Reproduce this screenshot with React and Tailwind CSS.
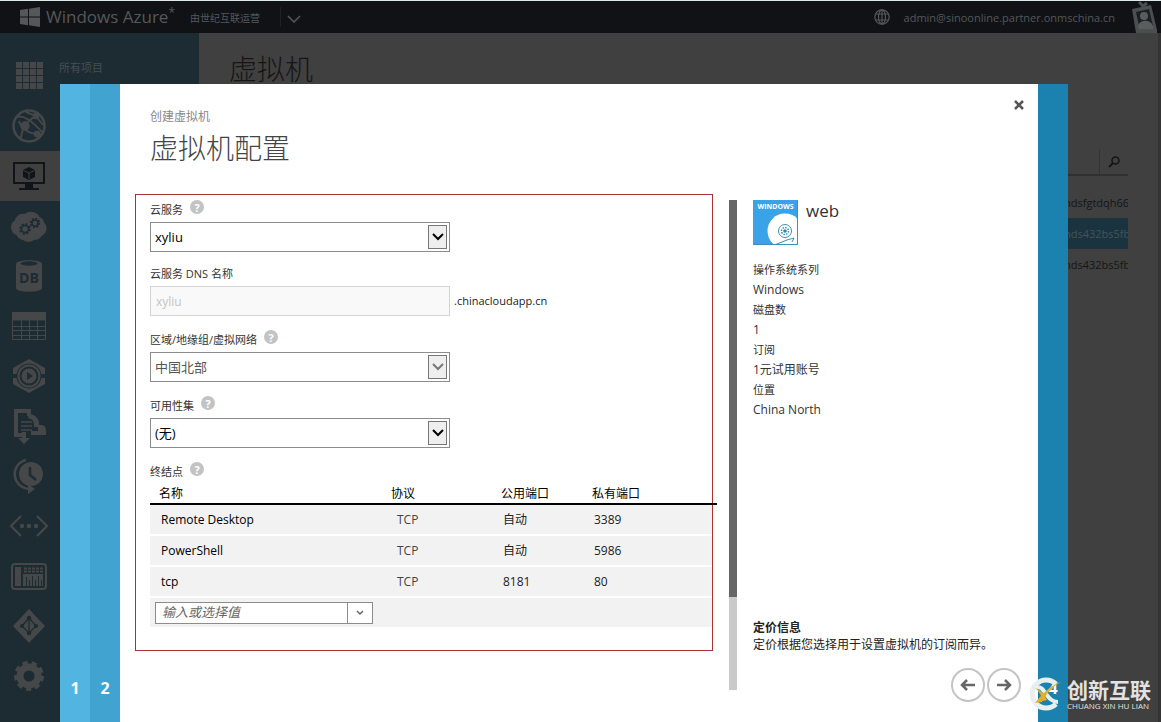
// src/pages/VirtualMachines/CreateVm.jsx
import React, { useState } from "react";

const ENDPOINTS = [
  { nombre: "Remote Desktop", protocolo: "TCP", publico: "自动", privado: "3389" },
  { nombre: "PowerShell", protocolo: "TCP", publico: "自动", privado: "5986" },
  { nombre: "tcp", protocolo: "TCP", publico: "8181", privado: "80" },
];

const SUMMARY = [
  ["操作系统系列", "Windows"],
  ["磁盘数", "1"],
  ["订阅", "1元试用账号"],
  ["位置", "China North"],
];

// Sidebar glyphs, all drawn on a 40x40 box
const NAV = [
  {
    name: "所有项目",
    icon: (
      <g fill="currentColor">
        {[0, 1, 2, 3].map((r) =>
          [0, 1, 2, 3].map((c) => (
            <rect key={`${r}-${c}`} x={7 + c * 7} y={6 + r * 7} width="6" height="6" />
          ))
        )}
      </g>
    ),
  },
  {
    name: "网站",
    icon: (
      <g fill="none" stroke="currentColor" strokeWidth="2.5">
        <circle cx="20" cy="20" r="15.5" />
        <path d="M8 11C14 9 21 13 34 27M31 9C22 11 13 19 12 32M10 15C12 22 20 29 32 28M17 6l10 4 7 9" strokeWidth="2" />
        <circle cx="16" cy="20" r="3.500" fill="currentColor" />
        <circle cx="27" cy="10" r="2" fill="currentColor" />
        <circle cx="28" cy="28" r="2" fill="currentColor" />
      </g>
    ),
  },
  {
    name: "虚拟机",
    active: true,
    icon: (
      <g>
        <path d="M5 7h30v20H5z" fill="none" stroke="currentColor" strokeWidth="2" />
        <path d="M16 28h8v4h6v2H10v-2h6z" fill="currentColor" />
        <path d="M20 11l6 3v7l-6 3-6-3v-7z" fill="currentColor" />
        <path d="M14.5 14.500l5.500 2.500 5.500-2.500M20 17v6" fill="none" stroke="#404040" />
      </g>
    ),
  },
  {
    name: "云服务",
    icon: (
      <g>
        <path d="M8 28a7 7 0 0 1-1-13 7 7 0 0 1 9-6 9 9 0 0 1 14 3 6 6 0 0 1 4 5 7 7 0 0 1-2 12 8 8 0 0 1-7 4 9 9 0 0 1-11 0 8 8 0 0 1-6-5z" fill="currentColor" stroke="currentColor" strokeWidth="2" />
        <circle cx="16" cy="23" r="4.500" fill="none" stroke="#1d2b32" strokeWidth="2.500" strokeDasharray="2 1.500" />
        <circle cx="16" cy="23" r="3.500" fill="none" stroke="#1d2b32" strokeWidth="1.500" />
        <circle cx="26" cy="17" r="4" fill="none" stroke="#1d2b32" strokeWidth="2.500" strokeDasharray="1.800 1.300" />
        <circle cx="26" cy="17" r="3" fill="none" stroke="#1d2b32" strokeWidth="1.500" />
      </g>
    ),
  },
  {
    name: "SQL 数据库",
    icon: (
      <g>
        <path d="M7 8c0-5 26-5 26 0v24c0 5-26 5-26 0z" fill="currentColor" />
        <ellipse cx="20" cy="7.500" rx="8.500" ry="2.200" fill="#1d2b32" />
        <text x="20" y="27" textAnchor="middle" fontSize="14" fontWeight="700" fill="#1d2b32">
          DB
        </text>
      </g>
    ),
  },
  {
    name: "存储",
    icon: (
      <g>
        <path d="M3 6h34v8H3z" fill="currentColor" />
        <path d="M3.500 14h33v19.500h-33zM3 20.500h34M3 24.500h34M3 29.500h34M12.500 14v19M20.500 14v19M28.500 14v19" fill="none" stroke="currentColor" />
      </g>
    ),
  },
  {
    name: "媒体服务",
    icon: (
      <g>
        <path d="M4 18V12L20 3l16 9v6zM4 22v6l16 9 16-9v-6z" fill="currentColor" />
        <circle cx="20" cy="20" r="12.500" fill="#1d2b32" />
        <circle cx="20" cy="20" r="10.500" fill="none" stroke="currentColor" strokeWidth="2" />
        <circle cx="20" cy="20" r="7.500" fill="currentColor" />
        <path d="M18 16l6 4-6 4z" fill="#1d2b32" />
      </g>
    ),
  },
  {
    name: "服务总线",
    icon: (
      <g>
        <path d="M13 29H7V5h13v5" fill="none" stroke="currentColor" strokeWidth="4" />
        <path d="M20 8a10 10 0 0 1 10 11h2c5 0 5 3 5 10H22v-4h7v-4h-4c0-6-1-8-6-9z" fill="currentColor" />
        <path d="M12 16h11M12 20h11M12 24h11" stroke="currentColor" strokeWidth="1.500" />
        <path d="M13 26h4v6h4l-6 6-6-6h4z" fill="currentColor" />
      </g>
    ),
  },
  {
    name: "计划程序",
    icon: (
      <g>
        <circle cx="22" cy="18" r="12" fill="currentColor" />
        <path d="M21 11v8l6 5" fill="none" stroke="#1d2b32" strokeWidth="2.500" />
        <path d="M17 4C1 8 2 31 20 33" fill="none" stroke="currentColor" strokeWidth="2.500" />
        <path d="M19 28l7 5-7 5z" fill="currentColor" />
      </g>
    ),
  },
  {
    name: "虚拟网络",
    icon: (
      <g>
        <path d="M12 10L2 20l10 10M28 10l10 10-10 10" fill="none" stroke="currentColor" strokeWidth="2.200" />
        <circle cx="13" cy="20" r="2.200" fill="currentColor" />
        <circle cx="20" cy="20" r="2.200" fill="currentColor" />
        <circle cx="27" cy="20" r="2.200" fill="currentColor" />
      </g>
    ),
  },
  {
    name: "流量管理器",
    icon: (
      <g>
        <rect x="3" y="8" width="34" height="25" rx="3" fill="none" stroke="currentColor" strokeWidth="2" />
        <path d="M6 11h6v19H6zM14 18h20v12H14z" fill="currentColor" />
        <path d="M15 12.500h19M15 15.500h19" stroke="currentColor" strokeWidth="2" strokeDasharray="3 1" />
        <path d="M17.500 30v-9M20.500 30v-6M23.500 30v-10M26.500 30v-6M29.500 30v-10M32.500 30v-6" stroke="#1d2b32" />
      </g>
    ),
  },
  {
    name: "Active Directory",
    icon: (
      <g>
        <path d="M20 3l16 17-16 17L4 20z" fill="currentColor" />
        <path d="M20 12l-7 8 7 7 7-7zM20 12v15" fill="none" stroke="#1d2b32" strokeWidth="1.200" />
        <g fill="#1d2b32">
          <circle cx="20" cy="12" r="2.200" />
          <circle cx="13" cy="20" r="2" />
          <circle cx="27" cy="20" r="2" />
          <circle cx="20" cy="27" r="2.200" />
        </g>
      </g>
    ),
  },
  {
    name: "设置",
    icon: (
      <g fill="none" stroke="currentColor">
        <circle cx="20" cy="20" r="9" strokeWidth="7" />
        <circle cx="20" cy="20" r="13" strokeWidth="4" strokeDasharray="5.200 3.870" />
      </g>
    ),
  },
];

function Help() {
  return (
    <span className="mb-2 ml-[7px] flex size-3.5 items-center justify-center rounded-full bg-[#c3c3c3] text-[11px] leading-none font-bold text-white">
      ?
    </span>
  );
}

function Field({ id, label, help, children }) {
  return (
    <div>
      <div className={help ? "flex h-[26px] items-end" : "flex h-6 items-end"}>
        <label htmlFor={id} className="pb-1 text-[11px] leading-4 text-[#333]">
          {label}
        </label>
        {help && <Help />}
      </div>
      {children}
    </div>
  );
}

function Select({ id, value, dim }) {
  return (
    <div className="grid w-[300px] items-center">
      <select
        id={id}
        className={`col-start-1 row-start-1 h-[30px] w-full appearance-none border border-[#8c8c8c] bg-white px-1 text-[13px] ${
          dim ? "text-[#555]" : "text-black"
        }`}
      >
        <option>{value}</option>
      </select>
      <span
        className={`pointer-events-none col-start-1 row-start-1 mr-[3px] flex h-6 w-[19px] items-center justify-center justify-self-end border border-[#777] bg-[#eee] ${
          dim ? "text-[#777]" : "text-black"
        }`}
      >
        <svg viewBox="0 0 12 8" className="h-2 w-3" fill="none" stroke="currentColor" strokeWidth="2">
          <path d="M1 1l5 5 5-5" />
        </svg>
      </span>
    </div>
  );
}

function Header() {
  return (
    <header className="flex h-[33px] items-center border-t border-[#dfe7e7] bg-[#101216] text-[#55585a]">
      <svg viewBox="0 0 20 20" className="ml-5 size-5" fill="#55585a">
        <path d="M0 3l8-1.200V9.500H0zM9 1.700L20 0v9.500H9zM0 10.500h8v7.700L0 17zM9 10.500h11V20L9 18.300z" />
      </svg>
      <span className="ml-1.5 text-[17px]">Windows Azure</span>
      <span className="-mt-2 text-xs leading-none">*</span>
      <span className="ml-[15px] pt-0.5 text-[10px]">由世纪互联运营</span>
      <span className="ml-5 h-5 w-px bg-[#1f2225]" />
      <button type="button" aria-label="菜单" className="ml-1.5 pt-1">
        <svg viewBox="0 0 14 8" className="h-2 w-3.5" fill="none" stroke="currentColor" strokeWidth="1.500">
          <path d="M1 1l6 6 6-6" />
        </svg>
      </button>
      <svg viewBox="0 0 16 16" className="ml-auto size-4" fill="none" stroke="currentColor" strokeWidth="1.200">
        <circle cx="8" cy="8" r="7.200" />
        <ellipse cx="8" cy="8" rx="3.500" ry="7.200" />
        <path d="M1.500 5h13M1.500 11h13M8 1v14" />
      </svg>
      <span className="ml-3.5 pt-0.5 text-[11px]">admin@sinoonline.partner.onmschina.cn</span>
      <svg viewBox="0 0 28 32" className="mr-0.5 ml-4 h-8 w-7">
        <path d="M1 8l19-4 6 25v3H5z" fill="#4c4f50" />
        <path d="M8 1l4 4 4-3" fill="none" stroke="#4c4f50" strokeWidth="3" />
        <path d="M5 11l13-3 4 17H8z" fill="#1d2022" />
        <circle cx="13" cy="15" r="4" fill="#5a5d5e" />
        <path d="M7 26c0-7 12-9 15-1v3H8z" fill="#5a5d5e" />
      </svg>
    </header>
  );
}

function Backdrop() {
  return (
    <div className="col-start-1 row-start-1 flex min-h-screen flex-col">
      <Header />
      <div className="flex flex-1">
        <nav className="w-[199px] shrink-0 bg-[#1d2b32] pt-[18px]">
          {NAV.map((n) => (
            <a
              key={n.name}
              href="#"
              aria-label={n.name}
              className={`flex h-[50px] items-center pl-[9px] ${
                n.active ? "bg-[#404040] text-[#111418]" : "text-[#454748]"
              }`}
            >
              <svg viewBox="0 0 40 40" className="size-10">
                {n.icon}
              </svg>
              {n.name === "所有项目" && (
                <span className="ml-2.5 pb-4 text-[11px] text-[#454f53]">{n.name}</span>
              )}
            </a>
          ))}
        </nav>
        <main className="flex min-w-0 flex-1 flex-col border-r-[3px] border-[#343434] bg-[#404040] pr-[30px] pl-[30px] text-[#151515]">
          <h2 className="pt-4 text-[28px] leading-10 font-light">虚拟机</h2>
          <div className="mt-[60px] flex h-[27px] w-[90px] justify-end self-end border-b-2 border-[#303030]">
            <button type="button" aria-label="搜索" className="border-l border-[#333] pr-2 pl-2">
              <svg viewBox="0 0 12 12" className="size-3" fill="none" stroke="currentColor" strokeWidth="1.500">
                <circle cx="7.500" cy="4.500" r="3.500" />
                <path d="M5 7l-4 4" strokeWidth="2" />
              </svg>
            </button>
          </div>
          <ul className="mt-[11px] w-16 self-end overflow-hidden text-[11px] leading-[31px]">
            <li className="w-24">hdsfgtdqh66b</li>
            <li className="w-24 bg-[#1b333e] text-[#44535a]">hds432bs5fb8</li>
            <li className="w-24">hds432bs5fb8</li>
          </ul>
        </main>
      </div>
    </div>
  );
}

function EndpointTable() {
  const [nuevo, setNuevo] = useState("");

  return (
    <div className="-mr-[5px]">
      <table className="w-full table-fixed border-collapse text-left">
        <colgroup>
          <col className="w-[232px]" />
          <col className="w-[110px]" />
          <col className="w-[91px]" />
          <col />
          <col className="w-[5px]" />
        </colgroup>
        <thead>
          <tr className="h-5 border-b-2 border-black text-xs leading-4 text-black">
            <th className="pl-[9px] font-normal">名称</th>
            <th className="pl-[9px] font-normal">协议</th>
            <th className="pl-[9px] font-normal">公用端口</th>
            <th className="pl-[9px] font-normal">私有端口</th>
            <td />
          </tr>
        </thead>
        <tbody className="text-xs text-[#222]">
          {ENDPOINTS.map((e) => (
            <tr key={e.nombre} className="h-[31px]">
              <td className="border-b-2 border-white bg-[#f2f2f2] pl-[11px] text-black">{e.nombre}</td>
              <td className="border-b-2 border-white bg-[#f2f2f2] pl-[15px] text-[#444]">{e.protocolo}</td>
              <td className="border-b-2 border-white bg-[#f2f2f2] pl-[11px]">{e.publico}</td>
              <td className="border-b-2 border-white bg-[#f2f2f2] pl-[11px]">{e.privado}</td>
            </tr>
          ))}
          <tr className="h-[30px]">
            <td colSpan={4} className="bg-[#f2f2f2] pl-[5px]">
              <div className="flex h-[22px] w-[218px] border border-[#8c8c8c] bg-white">
                <input
                  aria-label="终结点名称"
                  value={nuevo}
                  onChange={(ev) => setNuevo(ev.target.value)}
                  placeholder="输入或选择值"
                  className="min-w-0 flex-1 px-1.5 text-[13px] italic outline-none placeholder:text-[#666]"
                />
                <button
                  type="button"
                  aria-label="选择终结点"
                  className="flex w-[25px] items-center justify-center border-l border-[#8c8c8c] text-[#666]"
                >
                  <svg viewBox="0 0 8 6" className="h-1.5 w-2" fill="none" stroke="currentColor" strokeWidth="1.500">
                    <path d="M1 1l3 3 3-3" />
                  </svg>
                </button>
              </div>
            </td>
          </tr>
        </tbody>
      </table>
    </div>
  );
}

function Summary() {
  return (
    <aside className="mt-1.5 ml-4 flex w-[285px] shrink-0 flex-col text-[#333]">
      <div className="flex gap-2">
        <svg viewBox="0 0 45 45" className="size-[45px]">
          <rect width="45" height="45" fill="#3aa3e8" />
          <circle cx="32" cy="31" r="17.500" fill="#fff" />
          <path d="M24 44l10-4 7-2-2 4M20 45l4-1" fill="none" stroke="#3d8fae" />
          <circle cx="32" cy="31" r="6.500" fill="none" stroke="#3d8fae" />
          <circle cx="32" cy="31" r="3.500" fill="none" stroke="#3d8fae" strokeWidth="1.500" strokeDasharray="1.500 1.200" />
          <circle cx="32" cy="31" r="1.800" fill="#2d89b5" />
          <path d="M0 44.500h44.500V0" fill="none" stroke="#3d8fc0" />
          <text x="22.500" y="9" textAnchor="middle" fontSize="7" fontWeight="700" fill="#fff">
            WINDOWS
          </text>
        </svg>
        <span className="text-[17px] leading-[22px]">web</span>
      </div>
      <dl className="mt-[15px]">
        {SUMMARY.map(([k, v]) => (
          <div key={k}>
            <dt className="text-[11px] leading-5">{k}</dt>
            <dd className="text-xs leading-5">{v}</dd>
          </div>
        ))}
      </dl>
      <div className="mt-auto text-xs leading-[17px] text-[#222]">
        <h3 className="font-bold">定价信息</h3>
        <p>定价根据您选择用于设置虚拟机的订阅而异。</p>
      </div>
      <div className="mt-[15px] flex justify-end gap-0.5 pr-[17px] text-[#666]">
        <button
          type="button"
          aria-label="上一步"
          className="flex size-[34px] items-center justify-center rounded-full border-2 border-[#c4c4c4]"
        >
          <svg viewBox="0 0 16 14" className="h-3.5 w-4" fill="none" stroke="currentColor" strokeWidth="2.500">
            <path d="M15 7H2M7 2L2 7l5 5" />
          </svg>
        </button>
        <button
          type="button"
          aria-label="下一步"
          className="flex size-[34px] items-center justify-center rounded-full border-2 border-[#c4c4c4]"
        >
          <svg viewBox="0 0 16 14" className="h-3.5 w-4" fill="none" stroke="currentColor" strokeWidth="2.500">
            <path d="M1 7h13M9 2l5 5-5 5" />
          </svg>
        </button>
      </div>
    </aside>
  );
}

function Wizard() {
  return (
    <div className="col-start-1 row-start-1 mt-[84px] mr-[93px] ml-[60px] flex text-base leading-6 font-bold text-white">
      <div className="flex w-[30px] items-end justify-center bg-[#52b5e1] pb-[22px]">1</div>
      <div className="flex w-[30px] items-end justify-center bg-[#41a3cf] pb-[22px]">2</div>
      <section className="flex min-w-0 flex-1 flex-col bg-white pb-5 font-normal">
        <div className="flex justify-between pt-[23px] pr-3 pl-[30px]">
          <div>
            <p className="text-xs leading-5 text-[#888]">创建虚拟机</p>
            <h1 className="text-[28px] leading-[42px] font-light text-[#444]">虚拟机配置</h1>
          </div>
          <button
            type="button"
            aria-label="关闭"
            className="-mt-3 flex h-5 w-3.5 items-center justify-center text-[#555]"
          >
            <svg viewBox="0 0 10 10" className="size-2.5" fill="none" stroke="currentColor" strokeWidth="2.500">
              <path d="M1 1l8 8M9 1L1 9" />
            </svg>
          </button>
        </div>
        <div className="mt-[25px] flex flex-1 pl-[15px]">
          <form className="flex min-w-0 flex-1 flex-col gap-2.5 self-start border border-[#a83232] pt-px pb-[23px] pl-3.5">
            <Field id="servicio" label="云服务" help>
              <Select id="servicio" value="xyliu" />
            </Field>
            <Field id="dns" label="云服务 DNS 名称">
              <div className="flex items-center gap-1 text-[11px] text-[#222]">
                <input
                  id="dns"
                  disabled
                  defaultValue="xyliu"
                  className="h-[30px] w-[300px] border border-[#d4d4d4] bg-[#f9f9f9] px-[5px] text-xs text-[#c4c4c4]"
                />
                .chinacloudapp.cn
              </div>
            </Field>
            <Field id="region" label="区域/地缘组/虚拟网络" help>
              <Select id="region" value="中国北部" dim />
            </Field>
            <Field id="conjunto" label="可用性集" help>
              <Select id="conjunto" value="(无)" />
            </Field>
            <Field label="终结点" help>
              <EndpointTable />
            </Field>
          </form>
          {/* Barra de desplazamiento */}
          <div className="mt-1.5 mb-3 ml-4 w-2 shrink-0 bg-[#cacaca]">
            <div className="h-[81%] bg-[#666]" />
          </div>
          <Summary />
        </div>
      </section>
      <div className="flex w-[30px] items-end justify-center bg-[#1b82b0] pb-[22px]">4</div>
    </div>
  );
}

function Watermark() {
  return (
    <div className="absolute right-2.5 bottom-2.5 flex items-center gap-1 text-[#e2e2e2]">
      <svg viewBox="0 0 36 36" className="size-9">
        <path d="M29 8A14 14 0 1 0 29 28" fill="none" stroke="#e9eef0" strokeWidth="5" />
        <path d="M10 11c5 0 6 3 9 7s6 8 12 8" fill="none" stroke="#e9eef0" strokeWidth="4" />
        <path d="M34 6c-10 3-18 11-26 21l7-1C19 18 25 11 34 6z" fill="#e5ae23" />
        <path d="M8 12c6 2 9 6 12 12l-4 1C14 19 12 15 8 12z" fill="#e5ae23" />
      </svg>
      <div>
        <div className="text-[21px] leading-[22px] font-bold">创新互联</div>
        <div className="text-[8px] leading-[9px]">CHUANG XIN HU LIAN</div>
      </div>
    </div>
  );
}

export default function App() {
  return (
    <div className="relative grid min-h-screen bg-[#404040] font-['Open_Sans','Noto_Sans_CJK_SC',sans-serif]">
      <Backdrop />
      <Wizard />
      <Watermark />
    </div>
  );
}
